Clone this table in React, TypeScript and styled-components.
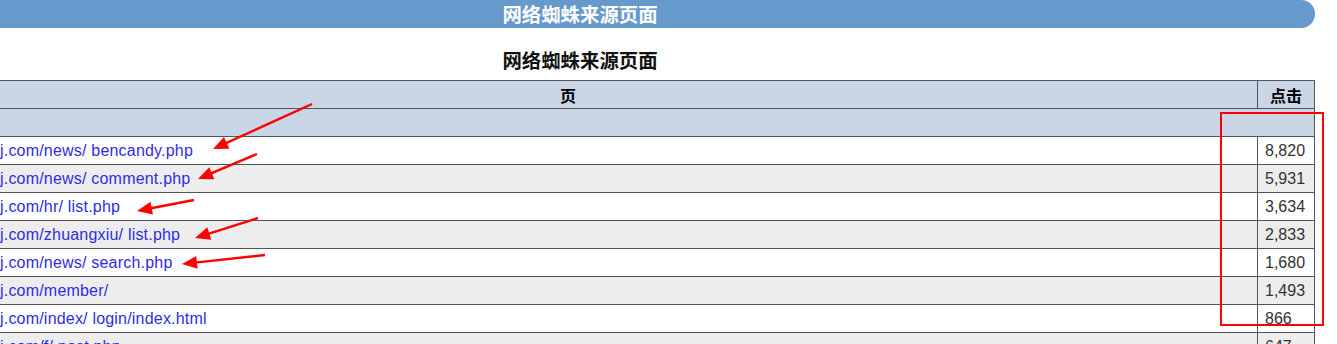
import React from 'react';
import styled, { createGlobalStyle } from 'styled-components';

const GlobalStyle = createGlobalStyle`
  html, body {
    margin: 0;
    padding: 0;
    background: #ffffff;
  }
  body {
    font-family: Arial, "Liberation Sans", "Noto Sans CJK SC", sans-serif;
  }
`;

const Page = styled.div`
  position: relative;
  width: 1337px;
  height: 344px;
  overflow: hidden;
`;

// the screenshot is a crop of a wider page, so the sheet starts left of the view
const Sheet = styled.div`
  margin-left: -155px;
  width: 1470px;
`;

const Banner = styled.div`
  height: 28px;
  background: #6699cc;
  border-radius: 0 14px 14px 0;
  color: #ffffff;
  font-family: "Noto Sans CJK SC", sans-serif;
  font-weight: 700;
  font-size: 19.4px;
  line-height: 28px;
  text-align: center;
`;

const Title = styled.h2`
  margin: 20px 0 8px;
  height: 24px;
  font-family: "Noto Sans CJK SC", sans-serif;
  font-weight: 700;
  font-size: 19.4px;
  line-height: 24px;
  text-align: center;
  color: #111;
`;

const Table = styled.table`
  margin-left: 33px;
  width: 1437px;
  border-collapse: collapse;
  font-size: 16px;
`;

const HeadCell = styled.th<{ $narrow?: boolean }>`
  height: 27px;
  padding: 0;
  width: ${(p) => (p.$narrow ? '56px' : 'auto')};
  background: #c9d6e5;
  border: 1px solid #555;
  font-family: "Noto Sans CJK SC", sans-serif;
  font-weight: 700;
  font-size: 16px;
  color: #000;
  text-align: center;
`;

const BandCell = styled.td`
  height: 27px;
  padding: 0;
  background: #c9d6e5;
  border: 1px solid #555;
`;

const Row = styled.tr<{ $odd: boolean }>`
  background: ${(p) => (p.$odd ? '#ededed' : '#ffffff')};
`;

const PageCell = styled.td`
  height: 27px;
  padding: 0 0 0 121px;
  border: 1px solid #555;
  white-space: nowrap;
`;

const PageLink = styled.a`
  color: #2d2de6;
  text-decoration: none;
  letter-spacing: 0.2px;
`;

const HitsCell = styled.td`
  height: 27px;
  padding: 0 0 0 7px;
  border: 1px solid #555;
  color: #333;
  text-align: left;
`;

const Overlay = styled.svg`
  position: absolute;
  left: 0;
  top: 0;
  pointer-events: none;
`;

const rows = [
  { page: 'j.com/news/ bencandy.php', hits: '8,820' },
  { page: 'j.com/news/ comment.php', hits: '5,931' },
  { page: 'j.com/hr/ list.php', hits: '3,634' },
  { page: 'j.com/zhuangxiu/ list.php', hits: '2,833' },
  { page: 'j.com/news/ search.php', hits: '1,680' },
  { page: 'j.com/member/', hits: '1,493' },
  { page: 'j.com/index/ login/index.html', hits: '866' },
  { page: 'j.com/f/ post.php', hits: '647' },
];

const arrows = [
  { x1: 312, y1: 104, x2: 213, y2: 149 },
  { x1: 257, y1: 154, x2: 198, y2: 179 },
  { x1: 194, y1: 200, x2: 137, y2: 211 },
  { x1: 258, y1: 218, x2: 195, y2: 238 },
  { x1: 265, y1: 255, x2: 182, y2: 264 },
];

const Arrow: React.FC<{ x1: number; y1: number; x2: number; y2: number }> = ({ x1, y1, x2, y2 }) => {
  const len = Math.hypot(x2 - x1, y2 - y1);
  const ux = (x2 - x1) / len;
  const uy = (y2 - y1) / len;
  const head = 15;
  const half = 6.5;
  const bx = x2 - ux * head;
  const by = y2 - uy * head;
  const pts = `${x2},${y2} ${bx - uy * half},${by + ux * half} ${bx + uy * half},${by - ux * half}`;
  return (
    <g>
      <line x1={x1} y1={y1} x2={bx + ux * 2} y2={by + uy * 2} stroke="#ff0000" strokeWidth={2.4} />
      <polygon points={pts} fill="#ff0000" />
    </g>
  );
};

const App: React.FC = () => {
  return (
    <Page>
      <GlobalStyle />
      <Sheet>
        <Banner>网络蜘蛛来源页面</Banner>
        <Title>网络蜘蛛来源页面</Title>
        <Table>
          <thead>
            <tr>
              <HeadCell>页</HeadCell>
              <HeadCell $narrow>点击</HeadCell>
            </tr>
          </thead>
          <tbody>
            <tr>
              <BandCell colSpan={2} />
            </tr>
            {rows.map((r, i) => (
              <Row key={r.page} $odd={i % 2 === 1}>
                <PageCell>
                  <PageLink href="#">{r.page}</PageLink>
                </PageCell>
                <HitsCell>{r.hits}</HitsCell>
              </Row>
            ))}
          </tbody>
        </Table>
      </Sheet>
      <Overlay width={1337} height={344}>
        {arrows.map((a, i) => (
          <Arrow key={i} {...a} />
        ))}
        <rect x={1221} y={113} width={102} height={212} fill="none" stroke="#ff0000" strokeWidth={2} />
      </Overlay>
    </Page>
  );
};

export default App;
